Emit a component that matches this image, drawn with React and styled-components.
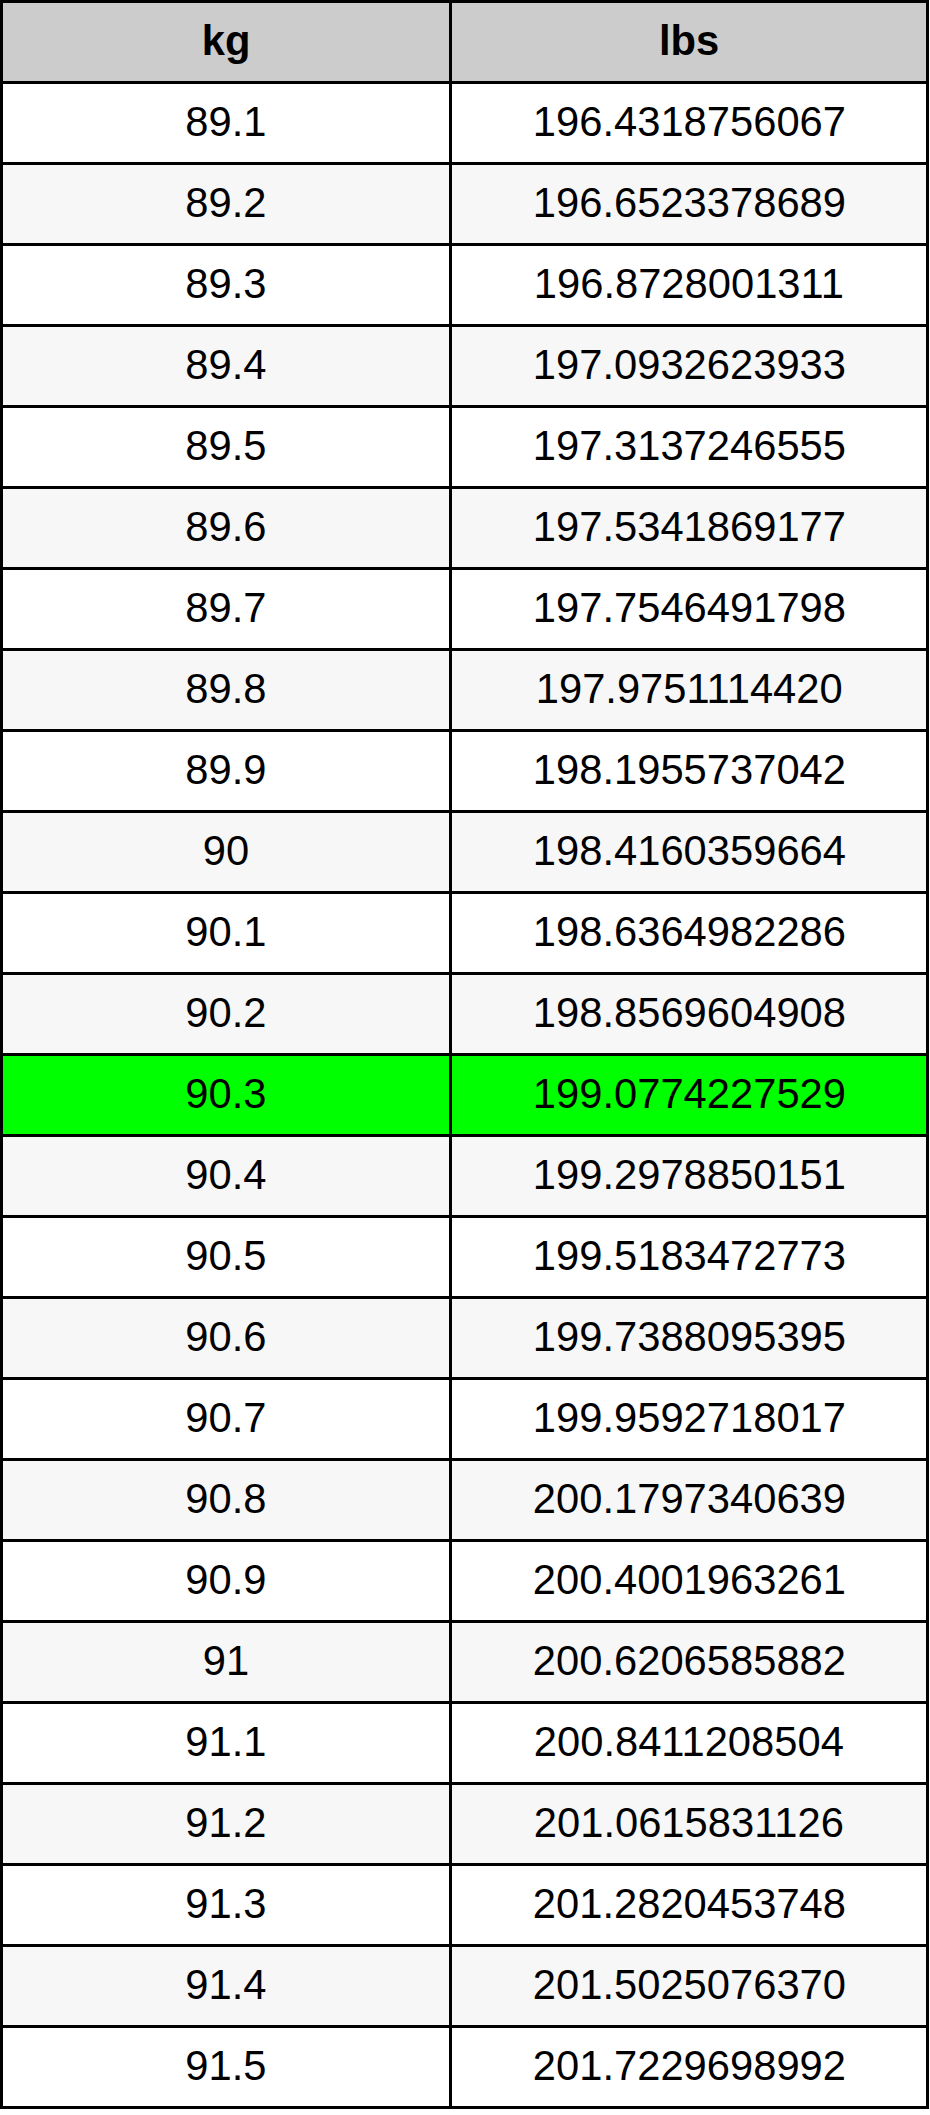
import React from "react";
import styled, { createGlobalStyle } from "styled-components";

const rows = [
    ["89.1", "196.4318756067"],
    ["89.2", "196.6523378689"],
    ["89.3", "196.8728001311"],
    ["89.4", "197.0932623933"],
    ["89.5", "197.3137246555"],
    ["89.6", "197.5341869177"],
    ["89.7", "197.7546491798"],
    ["89.8", "197.9751114420"],
    ["89.9", "198.1955737042"],
    ["90", "198.4160359664"],
    ["90.1", "198.6364982286"],
    ["90.2", "198.8569604908"],
    ["90.3", "199.0774227529"],
    ["90.4", "199.2978850151"],
    ["90.5", "199.5183472773"],
    ["90.6", "199.7388095395"],
    ["90.7", "199.9592718017"],
    ["90.8", "200.1797340639"],
    ["90.9", "200.4001963261"],
    ["91", "200.6206585882"],
    ["91.1", "200.8411208504"],
    ["91.2", "201.0615831126"],
    ["91.3", "201.2820453748"],
    ["91.4", "201.5025076370"],
    ["91.5", "201.7229698992"],
];

const highlighted = "90.3";

const GlobalStyle = createGlobalStyle`
    body {
        margin: 0;
        background: #fff;
        font-family: "Liberation Sans", Arial, sans-serif;
    }
`;

const Table = styled.div`
    display: grid;
    grid-template-columns: 446px 474px;
    grid-auto-rows: 78px;
    gap: 3px;
    padding: 3px;
    width: max-content;
    background: #000;
`;

const Cell = styled.div`
    display: flex;
    align-items: center;
    justify-content: center;
    padding-bottom: 4px;
    box-sizing: border-box;
    background: ${props => props.background};
    color: #000;
    font-size: 43px;
    font-weight: ${props => (props.head ? 700 : 400)};
`;

const Text = styled.span`
    display: inline-block;
    transform: scaleX(0.97);
`;

const rowBackground = (kg, i) => {
    if (kg === highlighted) return "#00ff00";
    return i % 2 === 0 ? "#ffffff" : "#f7f7f7";
};

const App = () => (
    <>
        <GlobalStyle />
        <Table>
            <Cell head background="#cccccc"><Text>kg</Text></Cell>
            <Cell head background="#cccccc"><Text>lbs</Text></Cell>
            {rows.map(([kg, lbs], i) => (
                <React.Fragment key={kg}>
                    <Cell background={rowBackground(kg, i)}><Text>{kg}</Text></Cell>
                    <Cell background={rowBackground(kg, i)}><Text>{lbs}</Text></Cell>
                </React.Fragment>
            ))}
        </Table>
    </>
);

export default App;
